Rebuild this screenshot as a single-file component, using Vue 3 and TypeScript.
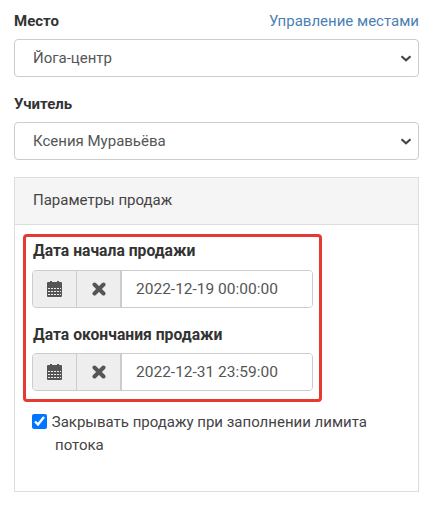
<script setup lang="ts">
import { ref } from 'vue'

const place = ref('Йога-центр')
const teacher = ref('Ксения Муравьёва')
const closeOnLimit = ref(true)

const dates = [
  { label: 'Дата начала продажи', value: '2022-12-19 00:00:00' },
  { label: 'Дата окончания продажи', value: '2022-12-31 23:59:00' },
]
</script>

<template>
  <div class="page">
    <div class="field">
      <div class="label-row">
        <label class="label">Место</label>
        <a class="link" href="#">Управление местами</a>
      </div>
      <div class="select-wrap">
        <select v-model="place" class="control">
          <option>Йога-центр</option>
        </select>
        <svg class="chevron" width="12" height="7" viewBox="0 0 12 7">
          <path fill="none" stroke="#444" stroke-width="2.2" d="M1.5 1.2L6 5.2l4.5-4" />
        </svg>
      </div>
    </div>

    <div class="field">
      <label class="label">Учитель</label>
      <div class="select-wrap">
        <select v-model="teacher" class="control">
          <option>Ксения Муравьёва</option>
        </select>
        <svg class="chevron" width="12" height="7" viewBox="0 0 12 7">
          <path fill="none" stroke="#444" stroke-width="2.2" d="M1.5 1.2L6 5.2l4.5-4" />
        </svg>
      </div>
    </div>

    <div class="panel">
      <div class="panel-heading">Параметры продаж</div>
      <div class="panel-body">
        <div class="highlight">
          <div v-for="d in dates" :key="d.label" class="date-field">
            <label class="label">{{ d.label }}</label>
            <div class="input-group">
              <button class="addon" type="button">
                <svg width="15" height="16" viewBox="0 0 15 16">
                  <path
                    fill="#555"
                    fill-rule="evenodd"
                    d="M3 0h2v1h5V0h2v1h2a1 1 0 0 1 1 1v13a1 1 0 0 1-1 1H1a1 1 0 0 1-1-1V2a1 1 0 0 1 1-1h2zM1 7v1h2V7zm3 0v1h2V7zm3 0v1h2V7zm3 0v1h2V7zm3 0v1h1V7zM1 10v1h2v-1zm3 0v1h2v-1zm3 0v1h2v-1zm3 0v1h2v-1zm3 0v1h1v-1zM1 13v1h2v-1zm3 0v1h2v-1zm3 0v1h2v-1zm3 0v1h2v-1zm3 0v1h1v-1z"
                  />
                </svg>
              </button>
              <button class="addon" type="button">
                <svg width="14" height="14" viewBox="0 0 14 14">
                  <path fill="none" stroke="#555" stroke-width="4" stroke-linecap="round" d="M2.5 2.5l9 9M11.5 2.5l-9 9" />
                </svg>
              </button>
              <input class="date-input" type="text" :value="d.value" />
            </div>
          </div>
        </div>
        <label class="check">
          <input v-model="closeOnLimit" type="checkbox" />
          Закрывать продажу при заполнении лимита потока
        </label>
      </div>
    </div>
  </div>
</template>

<style scoped>
.page {
  width: 405px;
  padding: 11px 0 0 14px;
  font-family: Roboto, 'Open Sans', sans-serif;
  font-size: 15px;
  color: #333;
}

.field {
  margin-bottom: 17px;
}

.label-row {
  display: flex;
  justify-content: space-between;
  align-items: baseline;
}

.label {
  display: block;
  margin-bottom: 8px;
  font-size: 15px;
  line-height: 20px;
  font-weight: 700;
  color: #333;
}

.link {
  color: #4a7fb5;
  text-decoration: none;
}

.select-wrap {
  position: relative;
}

.control {
  display: block;
  width: 100%;
  height: 38px;
  padding: 0 30px 0 18px;
  border: 1px solid #ccc;
  border-radius: 4px;
  background: #fff;
  font: inherit;
  color: #555;
  appearance: none;
}

.chevron {
  position: absolute;
  right: 7px;
  top: 16px;
  pointer-events: none;
}

.panel {
  height: 315px;
  box-sizing: border-box;
  border: 1px solid #ddd;
}

.panel-heading {
  height: 47px;
  box-sizing: border-box;
  padding-left: 18px;
  line-height: 44px;
  background: #f5f5f5;
  border-bottom: 1px solid #ddd;
  color: #444;
}

.panel-body {
  padding: 9px 8px;
}

.highlight {
  width: 299px;
  box-sizing: border-box;
  padding: 4px 6px 8px 7px;
  border: 3px solid #e53a33;
  border-radius: 4px;
}

.date-field .label {
  font-size: 15.7px;
  margin-bottom: 9px;
}

.date-field + .date-field {
  margin-top: 17px;
}

.date-field + .date-field .label {
  margin-bottom: 8px;
}

.input-group {
  display: flex;
  width: 281px;
  height: 38px;
  margin-left: -1px;
  box-sizing: border-box;
  border: 1px solid #ccc;
  border-radius: 4px;
  overflow: hidden;
}

.addon {
  flex: none;
  width: 44px;
  display: flex;
  align-items: center;
  justify-content: center;
  padding: 0;
  border: 0;
  border-right: 1px solid #ccc;
  background: #eee;
}

.date-input {
  flex: 1;
  min-width: 0;
  padding: 0 14px;
  border: 0;
  border-left: 1px solid #ccc;
  font: inherit;
  font-size: 15.5px;
  color: #555;
  outline: none;
}

.check {
  display: block;
  margin-top: 9px;
  padding-left: 32px;
  text-indent: -23px;
  padding-right: 30px;
  line-height: 23px;
  color: #444;
}

.check input {
  width: 15px;
  height: 15px;
  margin: 0 1px 0 0;
  vertical-align: -2px;
}
</style>
